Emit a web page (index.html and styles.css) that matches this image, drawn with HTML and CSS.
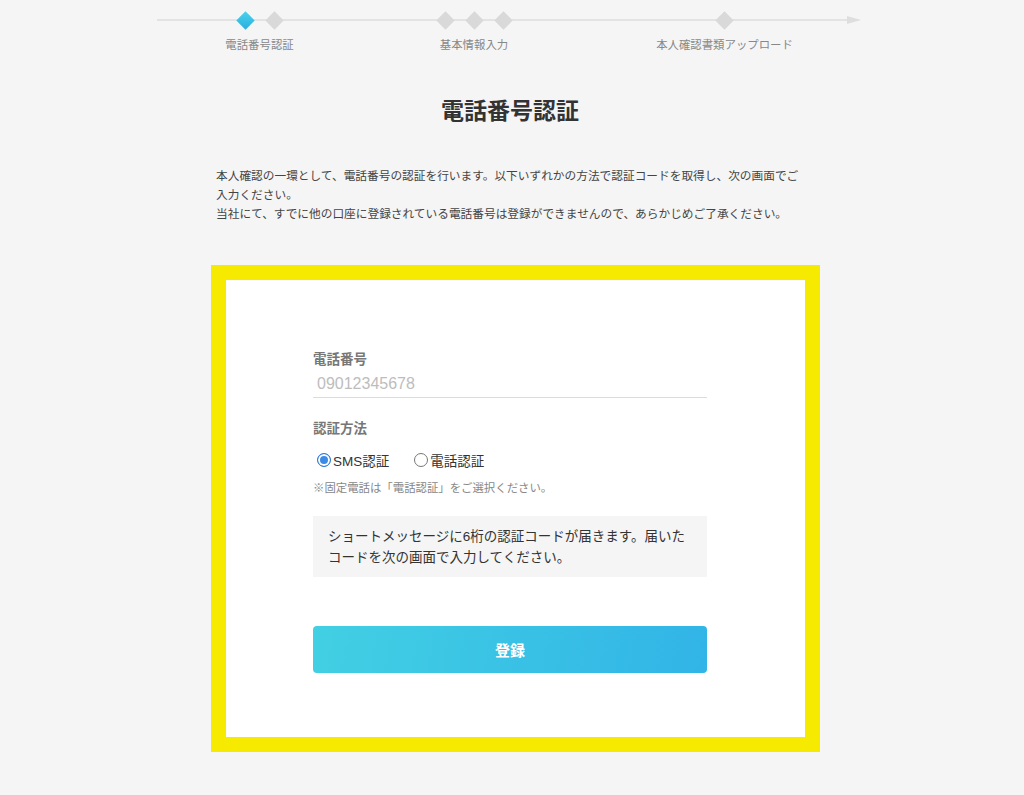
FILE: index.html
```html
<!doctype html>
<html lang="ja">
    <head>
        <meta charset="utf-8">
        <title>電話番号認証</title>
        <link rel="stylesheet" href="styles.css">
    </head>
    <body>
        <div class="page">
            <div class="stepper">
                <div class="step">
                    <div class="marks">
                        <span class="diamond active"></span>
                        <span class="diamond"></span>
                    </div>
                    <div class="step-label">電話番号認証</div>
                </div>
                <div class="step">
                    <div class="marks">
                        <span class="diamond"></span>
                        <span class="diamond"></span>
                        <span class="diamond"></span>
                    </div>
                    <div class="step-label">基本情報入力</div>
                </div>
                <div class="step">
                    <div class="marks">
                        <span class="diamond"></span>
                    </div>
                    <div class="step-label">本人確認書類アップロード</div>
                </div>
            </div>

            <h1 class="title">電話番号認証</h1>

            <p class="lead">本人確認の一環として、電話番号の認証を行います。以下いずれかの方法で認証コードを取得し、次の画面でご入力ください。<br>当社にて、すでに他の口座に登録されている電話番号は登録ができませんので、あらかじめご了承ください。</p>

            <div class="card">
                <form class="form">
                    <label class="field-label" for="tel">電話番号</label>
                    <input class="tel-input" id="tel" type="tel" placeholder="09012345678">

                    <div class="field-label method">認証方法</div>
                    <div class="radios">
                        <label class="radio"><input type="radio" name="method" value="sms" checked><span class="dot"></span>SMS認証</label>
                        <label class="radio"><input type="radio" name="method" value="call"><span class="dot"></span>電話認証</label>
                    </div>
                    <div class="note">※固定電話は「電話認証」をご選択ください。</div>

                    <div class="info">ショートメッセージに6桁の認証コードが届きます。届いたコードを次の画面で入力してください。</div>

                    <button class="submit" type="button">登録</button>
                </form>
            </div>
        </div>
    </body>
</html>
```

FILE: styles.css
```css
body {
    margin: 0;
    background: #f5f5f5;
    color: #333;
    font-family: "Liberation Sans", "Noto Sans CJK JP", sans-serif;
}

.page {
    width: 706px;
    margin-left: calc(50% - 355px);
    padding-bottom: 40px;
}

/* progress steps */
.stepper {
    position: relative;
    display: grid;
    grid-template-columns: 205px 224px 1fr;
    padding-top: 10px;
}

.stepper::before {
    content: "";
    position: absolute;
    left: 0;
    right: 12px;
    top: 19px;
    height: 2px;
    background: #e3e3e3;
}

.stepper::after {
    content: "";
    position: absolute;
    right: 2px;
    top: 16px;
    border-left: 14px solid #dedede;
    border-top: 4px solid transparent;
    border-bottom: 4px solid transparent;
}

.step {
    position: relative;
    display: flex;
    flex-direction: column;
    align-items: center;
}

.marks {
    display: flex;
    align-items: center;
    gap: 16px;
    height: 20px;
}

.diamond {
    width: 13px;
    height: 13px;
    background: #d9d9d9;
    transform: rotate(45deg);
}

.diamond.active {
    background: linear-gradient(135deg, #49d3ec, #2aaedf);
}

.step-label {
    margin-top: 7px;
    font-size: 11.4px;
    line-height: 16px;
    color: #888;
    white-space: nowrap;
}

.title {
    margin: 43px 0 0;
    text-align: center;
    font-size: 23px;
    line-height: 30px;
    font-weight: bold;
    color: #333;
}

.lead {
    margin: 40px 0 0 59px;
    width: 590px;
    font-size: 11.7px;
    line-height: 19px;
    color: #444;
}

/* form card */
.card {
    margin: 42px 0 0 54px;
    width: 579px;
    background: #fff;
    border: 15px solid #f5ea00;
}

.form {
    display: flex;
    flex-direction: column;
    padding: 70px 98px 64px 87px;
}

.field-label {
    font-size: 13.5px;
    line-height: 20px;
    font-weight: bold;
    color: #777;
}

.field-label.method {
    margin-top: 21px;
}

.tel-input {
    height: 28px;
    box-sizing: border-box;
    padding: 0 4px;
    border: none;
    border-bottom: 1px solid #dcdcdc;
    background: transparent;
    font-family: inherit;
    font-size: 16px;
    color: #333;
    outline: none;
}

.tel-input::placeholder {
    color: #bdbdbd;
}

.radios {
    display: flex;
    gap: 25px;
    margin-top: 10px;
    height: 22px;
    align-items: center;
    padding-left: 4px;
}

.radio {
    display: flex;
    align-items: center;
    gap: 2px;
    font-size: 13.5px;
    color: #333;
}

.radio input {
    display: none;
}

.dot {
    width: 12px;
    height: 12px;
    border-radius: 50%;
    border: 1px solid #777;
    background: #fff;
}

.radio input:checked + .dot {
    border-color: #2d79d5;
    background: #3b8ae6;
    box-shadow: inset 0 0 0 2px #fff;
}

.note {
    margin-top: 9px;
    font-size: 11.4px;
    line-height: 16px;
    color: #888;
}

.info {
    margin-top: 20px;
    padding: 10px 15px 9px;
    background: #f5f5f5;
    font-size: 13.5px;
    line-height: 21px;
    color: #333;
}

.submit {
    margin-top: 49px;
    height: 47px;
    border: none;
    border-radius: 4px;
    background: linear-gradient(100deg, #42d0e3, #31b4e7);
    color: #fff;
    font-family: inherit;
    font-size: 15px;
    font-weight: bold;
}
```
